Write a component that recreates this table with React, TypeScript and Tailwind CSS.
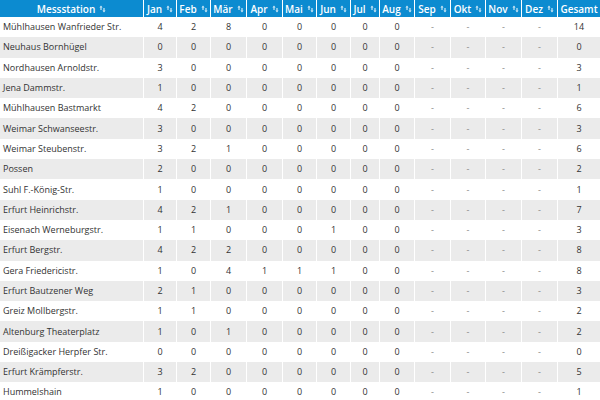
import React from 'react';

type Row = [string, ...number[]];

const months = ['Jan', 'Feb', 'Mär', 'Apr', 'Mai', 'Jun', 'Jul', 'Aug', 'Sep', 'Okt', 'Nov', 'Dez'];

// Jan..Aug values, Sep..Dez are still open, last value is the total
const rows: Row[] = [
	['Mühlhausen Wanfrieder Str.', 4, 2, 8, 0, 0, 0, 0, 0, 14],
	['Neuhaus Bornhügel', 0, 0, 0, 0, 0, 0, 0, 0, 0],
	['Nordhausen Arnoldstr.', 3, 0, 0, 0, 0, 0, 0, 0, 3],
	['Jena Dammstr.', 1, 0, 0, 0, 0, 0, 0, 0, 1],
	['Mühlhausen Bastmarkt', 4, 2, 0, 0, 0, 0, 0, 0, 6],
	['Weimar Schwanseestr.', 3, 0, 0, 0, 0, 0, 0, 0, 3],
	['Weimar Steubenstr.', 3, 2, 1, 0, 0, 0, 0, 0, 6],
	['Possen', 2, 0, 0, 0, 0, 0, 0, 0, 2],
	['Suhl F.-König-Str.', 1, 0, 0, 0, 0, 0, 0, 0, 1],
	['Erfurt Heinrichstr.', 4, 2, 1, 0, 0, 0, 0, 0, 7],
	['Eisenach Werneburgstr.', 1, 1, 0, 0, 0, 1, 0, 0, 3],
	['Erfurt Bergstr.', 4, 2, 2, 0, 0, 0, 0, 0, 8],
	['Gera Friedericistr.', 1, 0, 4, 1, 1, 1, 0, 0, 8],
	['Erfurt Bautzener Weg', 2, 1, 0, 0, 0, 0, 0, 0, 3],
	['Greiz Mollbergstr.', 1, 1, 0, 0, 0, 0, 0, 0, 2],
	['Altenburg Theaterplatz', 1, 0, 1, 0, 0, 0, 0, 0, 2],
	['Dreißigacker Herpfer Str.', 0, 0, 0, 0, 0, 0, 0, 0, 0],
	['Erfurt Krämpferstr.', 3, 2, 0, 0, 0, 0, 0, 0, 5],
	['Hummelshain', 1, 0, 0, 0, 0, 0, 0, 0, 1],
];

const grid =
	'grid grid-cols-[143px_32px_33px_35px_35px_33px_33px_28px_34px_35px_34px_35px_35px_42px] gap-x-px';

const SortIcon = () => (
	<svg width="7" height="8" viewBox="0 0 7 8" className="ml-[4px] shrink-0 opacity-80">
		<path d="M2 0.5 L3.6 2.6 H2.6 V5 H1.4 V2.6 H0.4 Z" fill="white" />
		<path d="M5 7.5 L6.6 5.4 H5.6 V3 H4.4 V5.4 H3.4 Z" fill="white" />
	</svg>
);

const HeadCell = ({ label, sort = true }: { label: string; sort?: boolean }) => (
	<div className="flex h-[17px] items-center justify-center bg-[#0c8bd0] text-[10px] font-semibold leading-none text-white">
		<span>{label}</span>
		{sort && <SortIcon />}
	</div>
);

export default function App() {
	return (
		<div className="h-[400px] w-[600px] overflow-hidden bg-white font-['Open_Sans',sans-serif] text-[#333]">
			<div className={grid}>
				<HeadCell label="Messstation" />
				{months.map((m) => (
					<HeadCell key={m} label={m} />
				))}
				<HeadCell label="Gesamt" sort={false} />
			</div>

			{rows.map(([name, ...vals], i) => {
				const counts = vals.slice(0, 8);
				const total = vals[8];
				const bg = i % 2 === 1 ? 'bg-[#ebebeb]' : 'bg-white';
				return (
					<div key={name} className={`${grid} h-[20.3px] text-[9px] leading-[12px]`}>
						<div className={`${bg} flex items-center pl-[3px]`}>{name}</div>
						{counts.map((v, j) => (
							<div key={j} className={`${bg} flex items-center justify-center`}>
								{v}
							</div>
						))}
						{[0, 1, 2, 3].map((j) => (
							<div key={`d${j}`} className={`${bg} flex items-center justify-center text-[#888]`}>
								-
							</div>
						))}
						<div className={`${bg} flex items-center justify-center`}>{total}</div>
					</div>
				);
			})}
		</div>
	);
}
